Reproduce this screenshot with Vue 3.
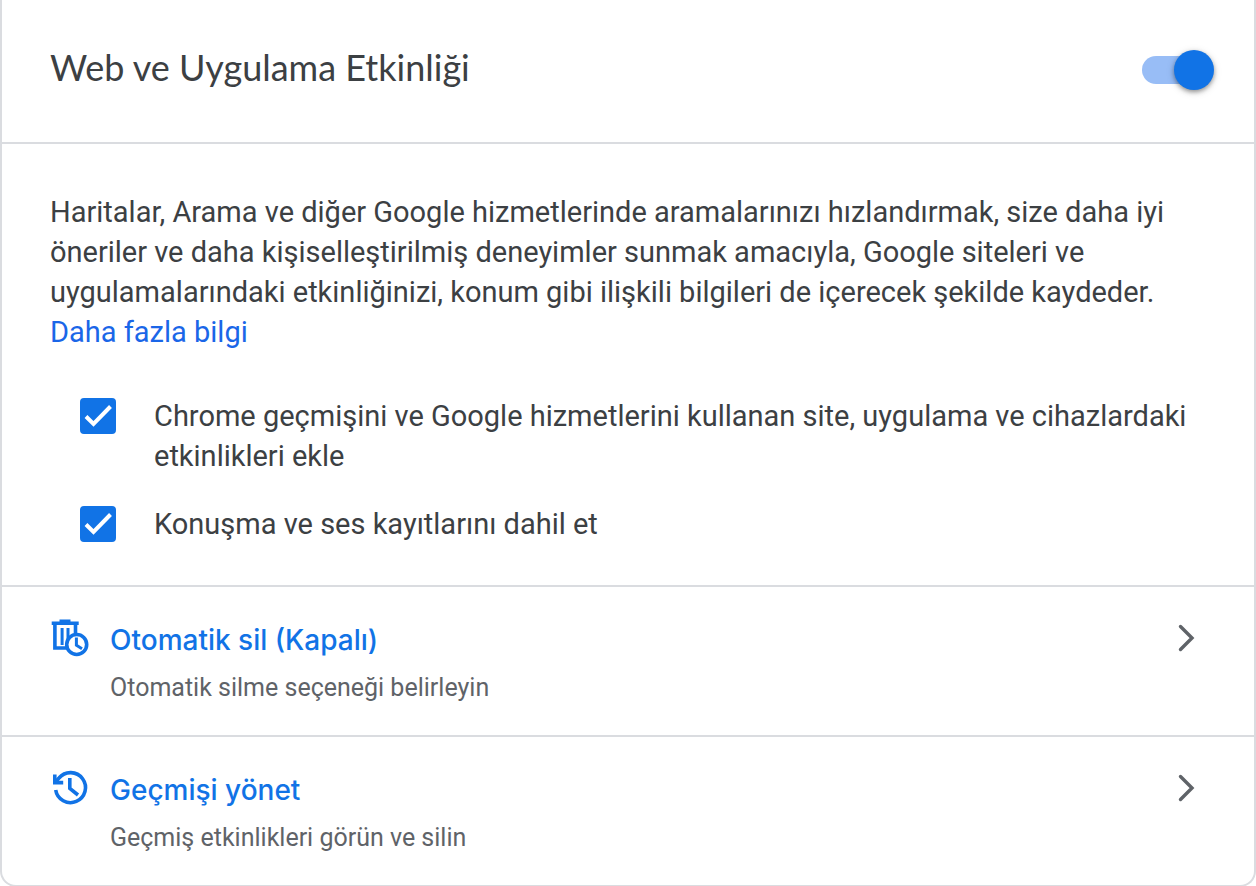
<script setup>
import { ref } from 'vue'

const enabled = ref(true)
const options = ref([
  {
    id: 'chrome',
    label: 'Chrome geçmişini ve Google hizmetlerini kullanan site, uygulama ve cihazlardaki etkinlikleri ekle',
    checked: true,
  },
  { id: 'voice', label: 'Konuşma ve ses kayıtlarını dahil et', checked: true },
])
const actions = [
  { id: 'auto-delete', title: 'Otomatik sil (Kapalı)', note: 'Otomatik silme seçeneği belirleyin' },
  { id: 'history', title: 'Geçmişi yönet', note: 'Geçmiş etkinlikleri görün ve silin' },
]
</script>

<template>
  <main class="card">
    <header class="head">
      <h1 id="activity-title">Web ve Uygulama Etkinliği</h1>
      <input v-model="enabled" class="switch" type="checkbox" role="switch" aria-labelledby="activity-title" />
    </header>

    <section class="details">
      <p>
        Haritalar, Arama ve diğer Google hizmetlerinde aramalarınızı hızlandırmak, size daha iyi
        öneriler ve daha kişiselleştirilmiş deneyimler sunmak amacıyla, Google siteleri ve
        uygulamalarındaki etkinliğinizi, konum gibi ilişkili bilgileri de içerecek şekilde kaydeder.
        <a href="#">Daha fazla bilgi</a>
      </p>
      <div class="options">
        <label v-for="o in options" :key="o.id" class="option" :for="o.id">
          <span class="box">
            <input :id="o.id" v-model="o.checked" type="checkbox" />
            <svg viewBox="0 0 36 36" aria-hidden="true"><path d="M6 18.5 13.5 26 30.5 8.5" /></svg>
          </span>
          <span>{{ o.label }}</span>
        </label>
      </div>
    </section>

    <a v-for="a in actions" :key="a.id" class="action" href="#">
      <svg v-if="a.id === 'auto-delete'" class="icon" viewBox="0 1 40 40" aria-hidden="true">
        <path d="M1.7 5.2H28.7M9.5 3.4H20.5" />
        <path d="M4.9 5V30H18M25.5 5V17" />
        <path class="thin" d="M12.1 10V27M18 10V22" />
        <circle cx="26.7" cy="26.5" r="10" />
        <path class="thin" d="M26.4 19.5V27.2L32 30.8" />
      </svg>
      <svg v-else class="icon" viewBox="0 1 40 40" aria-hidden="true">
        <path d="M5.7 22A15 15 0 1 0 9 10L5 14.5" />
        <path d="M4.8 6.5V14.6H13.2" />
        <path d="M19.8 10V20.5L28 27" />
      </svg>
      <span class="text">
        <strong>{{ a.title }}</strong>
        <span class="note">{{ a.note }}</span>
      </span>
      <svg class="chevron" viewBox="0 0 20 30" aria-hidden="true"><path d="M4.5 3.5 16 15 4.5 26.5" /></svg>
    </a>
  </main>
</template>

<style>
body {
  background: #fff;
}
</style>

<style scoped>
.card {
  box-sizing: border-box;
  border: 2px solid #dadce0;
  border-top: 0;
  border-radius: 0 0 16px 16px;
  color: #3c4043;
  font-family: Roboto, "Noto Sans", sans-serif;
  font-size: 29px;
  line-height: 40px;
}
.head {
  display: flex;
  align-items: flex-start;
  justify-content: space-between;
  padding: 44px 40px 52px 48px;
}
h1 {
  margin: 0;
  font-family: Lato, sans-serif;
  font-size: 36px;
  font-weight: 400;
  line-height: 46px;
}
.switch {
  appearance: none;
  display: flex;
  align-items: center;
  width: 72px;
  height: 28px;
  margin: 12px 0 0;
  border-radius: 14px;
  background: linear-gradient(90deg, #98bdf6 58px, transparent 58px);
  cursor: pointer;
}
.switch::before {
  content: "";
  width: 40px;
  height: 40px;
  flex: none;
  border-radius: 50%;
  background: #1173e6;
  box-shadow: 0 2px 4px rgba(0, 0, 0, 0.35), 0 2px 8px rgba(0, 0, 0, 0.15);
}
.switch:checked::before {
  margin-left: auto;
}
.details {
  padding: 48px 48px 41px;
  border-top: 2px solid #dadce0;
}
p {
  margin: 0;
}
p a {
  display: table;
  color: #1a66e8;
  text-decoration: none;
}
.options {
  display: grid;
  gap: 28px;
  padding: 44px 0 0 30px;
}
.option {
  display: flex;
  gap: 38px;
}
.box {
  display: grid;
  flex: none;
  width: 36px;
  height: 36px;
  margin-top: 2px;
}
.box > * {
  grid-area: 1 / 1;
}
.box input {
  appearance: none;
  width: 36px;
  height: 36px;
  margin: 0;
  border: 3px solid #5f6368;
  border-radius: 4px;
}
.box input:checked {
  border-color: #1173e6;
  background: #1173e6;
}
.box svg {
  pointer-events: none;
  fill: none;
  stroke: #fff;
  stroke-width: 4;
}
.action {
  display: flex;
  align-items: flex-start;
  gap: 20px;
  padding: 32px 58px 29px 48px;
  border-top: 2px solid #dadce0;
  color: #5f6368;
  text-decoration: none;
}
.icon {
  flex: none;
  width: 40px;
  height: 40px;
  fill: none;
  stroke: #1173e6;
  stroke-width: 3.6;
}
.icon .thin {
  stroke-width: 3;
}
.text {
  display: grid;
  flex: 1;
  gap: 9px;
}
strong {
  color: #1173e6;
  font-family: Inter, sans-serif;
  font-size: 28px;
  font-weight: 500;
  line-height: 42px;
}
.note {
  font-size: 25px;
  line-height: 36px;
}
.chevron {
  flex: none;
  width: 20px;
  height: 30px;
  margin-top: 4px;
  fill: none;
  stroke: #5f6368;
  stroke-width: 3.4;
  stroke-linecap: round;
}
</style>
